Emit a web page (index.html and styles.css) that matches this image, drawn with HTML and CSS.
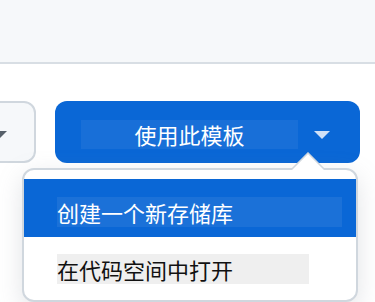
FILE: index.html
```html
<!DOCTYPE html>
<html lang="zh-CN">
<head>
<meta charset="utf-8">
<title>使用此模板</title>
<link rel="stylesheet" href="styles.css">
</head>
<body>
<header class="topbar"></header>
<main class="content">
  <div class="actions">
    <button class="btn-secondary" type="button" aria-label="更多">
      <svg class="caret" width="16" height="8" viewBox="0 0 16 8"><path d="M0 0h16L8 8z" fill="#57606a"/></svg>
    </button>
    <div class="split">
      <button class="btn-primary" type="button">
        <span class="label">使用此模板</span>
        <svg class="caret" width="16" height="8" viewBox="0 0 16 8"><path d="M0 0h16L8 8z" fill="#cfe0f7"/></svg>
      </button>
      <div class="menu">
        <svg class="notch" width="36" height="18" viewBox="0 0 36 18"><path d="M1 18L18 1L35 18" fill="#fff" stroke="#d0d7de" stroke-width="1.5"/></svg>
        <ul class="menu-list">
          <li class="menu-item active"><span class="item-text wide">创建一个新存储库</span></li>
          <li class="menu-item"><span class="item-text narrow">在代码空间中打开</span></li>
        </ul>
      </div>
    </div>
  </div>
</main>
</body>
</html>
```
FILE: styles.css
```css
html, body {
  margin: 0;
  padding: 0;
}
body {
  width: 375px;
  height: 302px;
  overflow: hidden;
  background: #ffffff;
  font-family: "Noto Sans CJK SC", "Noto Sans", sans-serif;
}
.topbar {
  height: 62px;
  background: #f6f8fa;
  border-bottom: 2px solid #d8dee4;
}
.content {
  padding-top: 37px;
}
.actions {
  display: flex;
  align-items: flex-start;
  gap: 19px;
}
.btn-secondary {
  box-sizing: border-box;
  margin-left: -40px;
  width: 76px;
  height: 62px;
  background: #f6f8fa;
  border: 2px solid #d0d7de;
  border-radius: 12px;
  display: flex;
  align-items: center;
  padding: 0 27px 0 0;
  justify-content: flex-end;
  cursor: pointer;
}
.btn-secondary .caret {
  margin-top: 5px;
}
.split {
  position: relative;
  width: 305px;
}
.btn-primary {
  box-sizing: border-box;
  width: 305px;
  height: 62px;
  background: #0a67d6;
  border: none;
  border-radius: 12px;
  display: flex;
  align-items: center;
  padding: 0 0 0 26px;
  gap: 16px;
  cursor: pointer;
  font-family: inherit;
}
.btn-primary .label {
  width: 217px;
  height: 29px;
  margin-top: 5px;
  line-height: 29px;
  background: rgba(255, 255, 255, 0.06);
  color: #ffffff;
  font-size: 22px;
  text-align: center;
}
.btn-primary .caret {
  margin-top: 6px;
}
.menu {
  position: absolute;
  top: 67px;
  left: -33px;
  width: 336px;
  box-sizing: border-box;
  background: #ffffff;
  border: 2px solid #d0d7de;
  border-radius: 12px;
  box-shadow: 0 8px 24px rgba(140, 149, 159, 0.25);
  padding-top: 9px;
}
.notch {
  position: absolute;
  top: -18px;
  left: 266px;
}
.menu-list {
  list-style: none;
  margin: 0;
  padding: 0;
}
.menu-item {
  display: flex;
  padding: 17px 0 16px 33px;
  font-size: 22px;
  color: #1f2328;
}
.menu-item.active {
  background: #0a67d6;
  color: #ffffff;
  padding: 18px 0 10px 33px;
}
.item-text {
  display: block;
  height: 30px;
  line-height: 30px;
}
.item-text.wide {
  width: 285px;
  background: rgba(255, 255, 255, 0.07);
}
.item-text.narrow {
  width: 252px;
  background: #efefef;
  color: #111111;
}
```
